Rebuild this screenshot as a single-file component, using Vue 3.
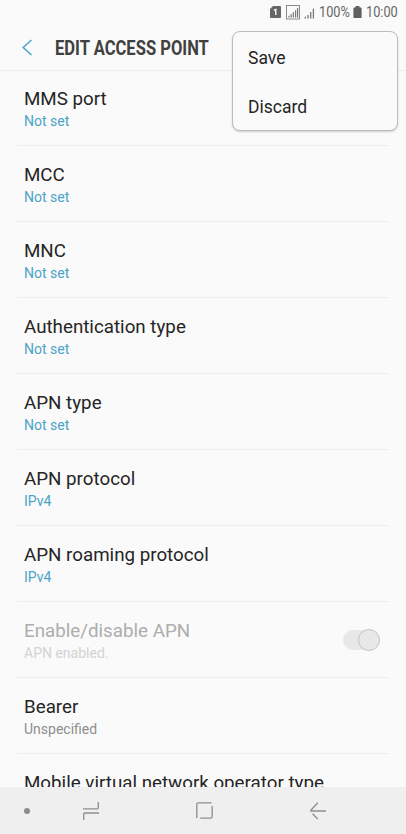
<script setup>
const rows = [
  { title: 'MMS port', value: 'Not set', kind: 'accent' },
  { title: 'MCC', value: 'Not set', kind: 'accent' },
  { title: 'MNC', value: 'Not set', kind: 'accent' },
  { title: 'Authentication type', value: 'Not set', kind: 'accent' },
  { title: 'APN type', value: 'Not set', kind: 'accent' },
  { title: 'APN protocol', value: 'IPv4', kind: 'accent' },
  { title: 'APN roaming protocol', value: 'IPv4', kind: 'accent' },
  { title: 'Enable/disable APN', value: 'APN enabled.', kind: 'disabled', toggle: true },
  { title: 'Bearer', value: 'Unspecified', kind: 'plain' },
  { title: 'Mobile virtual network operator type', value: '', kind: 'plain' },
]
const actions = ['Save', 'Discard']
</script>

<template>
  <div class="screen">
    <header class="header">
      <div class="status">
        <svg class="sim" width="11" height="12" viewBox="0 0 11 12">
          <path d="M3 0H10Q11 0 11 1V11Q11 12 10 12H1Q0 12 0 11V3Z" fill="#666" />
          <path d="M4 4.4L5.8 3.4V9" fill="none" stroke="#fafafa" stroke-width="1.4" />
        </svg>
        <svg class="signal" width="14" height="15" viewBox="0 0 14 15">
          <rect x=".5" y=".5" width="13" height="13.5" fill="none" stroke="#8a8a8a" />
          <path d="M3 12.5V10.7M5.2 12.5V9M7.4 12.5V7.2M9.6 12.5V5.2M11.6 12.5V3" stroke="#777" stroke-width="1.2" />
        </svg>
        <svg class="signal-small" width="11" height="11" viewBox="0 0 11 11">
          <path d="M1.3 10.5V8.8M4 10.5V7M6.7 10.5V4M9.4 10.5V.8" stroke="#777" stroke-width="1.3" />
        </svg>
        <span class="percent">100%</span>
        <svg class="battery" width="9" height="12" viewBox="0 0 9 12">
          <path d="M2.5 0H6.5V1.5H8Q8.6 1.5 8.6 2.2V11.3Q8.6 12 8 12H1Q.4 12 .4 11.3V2.2Q.4 1.5 1 1.5H2.5Z" fill="#606060" />
        </svg>
        <span class="clock">10:00</span>
      </div>
      <div class="bar">
        <svg class="back" width="11" height="17" viewBox="0 0 11 17">
          <path d="M9.5 1L1.2 8.5L9.5 16" fill="none" stroke="#4ba3c7" stroke-width="1.5" />
        </svg>
        <h1 class="heading">EDIT ACCESS POINT</h1>
      </div>
    </header>

    <main class="list">
      <section v-for="row in rows" :key="row.title" class="row" :class="row.kind">
        <div class="texts">
          <div class="title">{{ row.title }}</div>
          <div class="value">{{ row.value }}</div>
        </div>
        <div v-if="row.toggle" class="toggle"><div class="knob"></div></div>
      </section>
    </main>

    <nav class="nav">
      <svg class="dot" width="6" height="6" viewBox="0 0 6 6"><circle cx="3" cy="3" r="3" fill="#8b8b8b" /></svg>
      <svg class="recents" width="16" height="18" viewBox="0 0 16 18">
        <path d="M0 6.8H14Q15.3 6.8 15.3 5.5V0M.7 18V12.3Q.7 11 2 11H16" fill="none" stroke="#8e8e8e" stroke-width="1.3" />
      </svg>
      <svg class="home" width="17" height="17" viewBox="0 0 17 17">
        <path d="M15.5 .8H2.3Q.8 .8 .8 2.3V16M4.2 16.2H14.5Q16.2 16.2 16.2 14.5V4" fill="none" stroke="#8e8e8e" stroke-width="1.3" />
      </svg>
      <svg class="return" width="16" height="18" viewBox="0 0 16 18">
        <path d="M7.8 .8L.8 8.3V9H16M2.5 11.8L7.8 17" fill="none" stroke="#8e8e8e" stroke-width="1.3" />
      </svg>
    </nav>

    <div class="menu">
      <div v-for="action in actions" :key="action" class="action">{{ action }}</div>
    </div>
  </div>
</template>

<style>
body {
  background: #fafafa;
}
</style>

<style scoped>
.screen {
  position: relative;
  display: flex;
  flex-direction: column;
  height: 834px;
  overflow: hidden;
  background: #fafafa;
  color: #252525;
  font-family: Roboto, "Liberation Sans", sans-serif;
}
.header {
  flex: 0 0 70px;
  border-bottom: 1px solid #ededed;
}
.status {
  display: flex;
  align-items: center;
  height: 24px;
  padding-left: 270px;
  font-size: 14.5px;
  line-height: 24px;
  color: #666;
}
.signal {
  margin-left: 5px;
}
.signal-small {
  margin: 2px 0 0 4px;
}
.percent,
.clock {
  padding-top: 2px;
  transform: scaleX(0.88);
  transform-origin: left;
}
.percent {
  width: 31px;
  margin-left: 4px;
}
.battery {
  margin-left: 3px;
}
.clock {
  margin-left: 4px;
}
.bar {
  display: flex;
  align-items: center;
  height: 46px;
  padding-left: 22px;
}
.heading {
  margin: 3px 0 0 22px;
  font-size: 19.5px;
  line-height: 24px;
  font-weight: 700;
  color: #404040;
  white-space: nowrap;
  transform: scaleX(0.85);
  transform-origin: left;
}
.list {
  flex: 1;
  min-height: 0;
  overflow: hidden;
}
.row {
  display: flex;
  align-items: center;
  justify-content: space-between;
  box-sizing: border-box;
  height: 76px;
  margin: 0 17px;
  padding: 2px 9px 0 7px;
  border-bottom: 1px solid #ededed;
}
.row:first-child {
  height: 75px;
}
.title {
  font-size: 19px;
  line-height: 24px;
  white-space: nowrap;
  transform: scaleX(0.987);
  transform-origin: left;
}
.value {
  min-height: 20px;
  font-size: 14px;
  line-height: 20px;
  color: #4ba3c7;
}
.plain .value {
  color: #8e8e8e;
}
.disabled .title {
  color: #adadad;
}
.disabled .value {
  color: #d3d3d3;
}
.toggle {
  display: flex;
  align-items: center;
  justify-content: flex-end;
  width: 37px;
  height: 20px;
  margin-bottom: 2px;
  border-radius: 10px;
  background: #e8e8e8;
}
.knob {
  flex: none;
  box-sizing: border-box;
  width: 22px;
  height: 22px;
  border: 1px solid #c3c3c3;
  border-radius: 50%;
  background: #e8e8e8;
}
.nav {
  display: flex;
  align-items: center;
  flex: 0 0 47px;
  padding: 0 0 0 24px;
  background: #efefef;
}
.recents {
  margin-left: 53px;
}
.home {
  margin-left: 97px;
}
.return {
  margin-left: 97px;
}
.menu {
  position: absolute;
  top: 31px;
  left: 232px;
  box-sizing: border-box;
  width: 166px;
  height: 100px;
  padding: 2px 0 0 15px;
  border: 1px solid #bdbdbd;
  border-radius: 8px;
  background: #fafafa;
  box-shadow: 0 1px 2px rgba(0, 0, 0, 0.18);
}
.action {
  height: 49px;
  font-size: 17.5px;
  line-height: 49px;
}
</style>
